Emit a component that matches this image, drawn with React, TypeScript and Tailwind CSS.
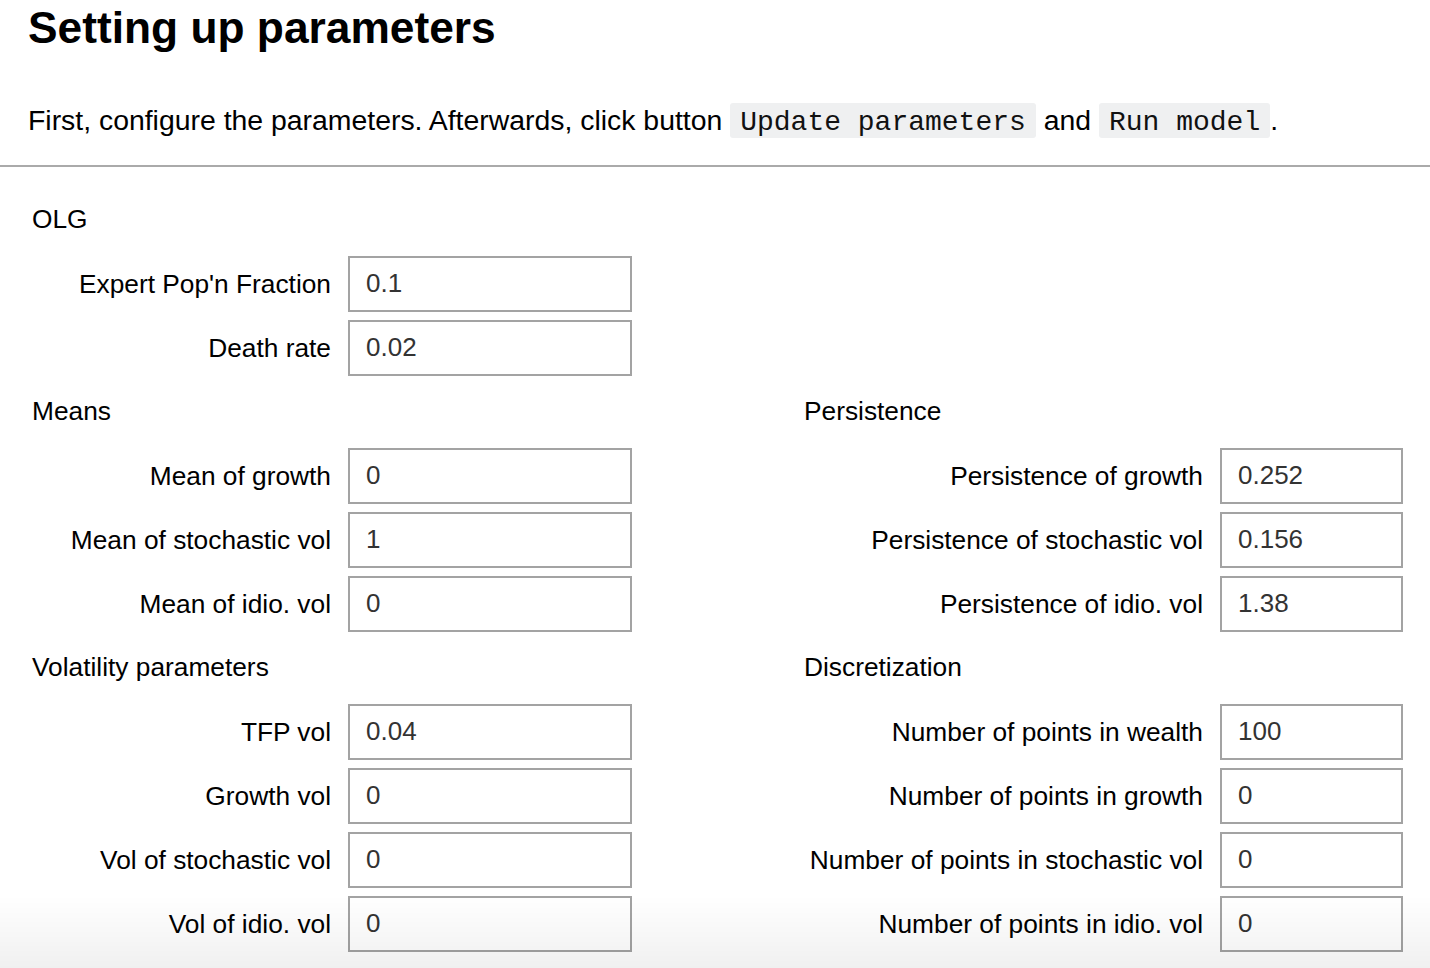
import React from "react";

type RowProps = { label: string; value: string; right?: boolean };

function Row({ label, value, right }: RowProps) {
  return (
    <div className="flex items-center h-[56px]">
      <div
        className={
          right
            ? "w-[399px] text-right text-[26.3px] leading-[30px] text-black whitespace-nowrap"
            : "w-[299px] text-right text-[26.3px] leading-[30px] text-black whitespace-nowrap"
        }
      >
        {label}
      </div>
      <input
        readOnly
        defaultValue={value}
        className={
          right
            ? "ml-[17px] w-[183px] h-[56px] border-2 border-[#a3a3a3] bg-transparent pl-[16px] pb-[2px] text-[26px] text-[#333] outline-none font-['Liberation_Sans',Arial,sans-serif]"
            : "ml-[17px] w-[284px] h-[56px] border-2 border-[#a3a3a3] bg-transparent pl-[16px] pb-[2px] text-[26px] text-[#333] outline-none font-['Liberation_Sans',Arial,sans-serif]"
        }
      />
    </div>
  );
}

type SectionProps = { title: string; rows: [string, string][]; right?: boolean };

function Section({ title, rows, right }: SectionProps) {
  return (
    <div className={right ? "w-[599px]" : "w-[600px]"}>
      <div className="text-[26.3px] leading-[30px] text-black">{title}</div>
      <div className="mt-[22px] flex flex-col gap-[8px]">
        {rows.map(([l, v]) => (
          <Row key={l} label={l} value={v} right={right} />
        ))}
      </div>
    </div>
  );
}

export default function App() {
  return (
    <div className="relative min-h-screen bg-white font-['Liberation_Sans',Arial,sans-serif] text-black">
      <div className="pl-[28px] pt-[3px] pb-[25px] border-b-2 border-[#aaaaaa]">
        <h1 className="text-[44.3px] leading-[50px] font-bold">Setting up parameters</h1>
        <p className="mt-[47px] text-[28.4px] leading-[40px] whitespace-nowrap">
          First, configure the parameters. Afterwards, click button{" "}
          <code className="inline-block rounded-[3px] bg-[#eff0f1] px-[10px] pt-[4px] leading-[31px] font-['Liberation_Mono',monospace] text-[28px] text-[#111]">
            Update parameters
          </code>{" "}
          and{" "}
          <code className="inline-block rounded-[3px] bg-[#eff0f1] px-[10px] pt-[4px] leading-[31px] font-['Liberation_Mono',monospace] text-[28px] text-[#111]">
            Run model
          </code>
          .
        </p>
      </div>

      <div className="pl-[32px] pt-[37px]">
        <Section
          title="OLG"
          rows={[
            ["Expert Pop'n Fraction", "0.1"],
            ["Death rate", "0.02"],
          ]}
        />
        <div className="mt-[20px] flex gap-[172px]">
          <Section
            title="Means"
            rows={[
              ["Mean of growth", "0"],
              ["Mean of stochastic vol", "1"],
              ["Mean of idio. vol", "0"],
            ]}
          />
          <Section
            right
            title="Persistence"
            rows={[
              ["Persistence of growth", "0.252"],
              ["Persistence of stochastic vol", "0.156"],
              ["Persistence of idio. vol", "1.38"],
            ]}
          />
        </div>
        <div className="mt-[20px] flex gap-[172px]">
          <Section
            title="Volatility parameters"
            rows={[
              ["TFP vol", "0.04"],
              ["Growth vol", "0"],
              ["Vol of stochastic vol", "0"],
              ["Vol of idio. vol", "0"],
            ]}
          />
          <Section
            right
            title="Discretization"
            rows={[
              ["Number of points in wealth", "100"],
              ["Number of points in growth", "0"],
              ["Number of points in stochastic vol", "0"],
              ["Number of points in idio. vol", "0"],
            ]}
          />
        </div>
      </div>

      <div className="pointer-events-none fixed bottom-0 left-0 right-0 h-[72px] bg-gradient-to-b from-[rgba(0,0,0,0)] to-[rgba(0,0,0,0.06)]" />
    </div>
  );
}
